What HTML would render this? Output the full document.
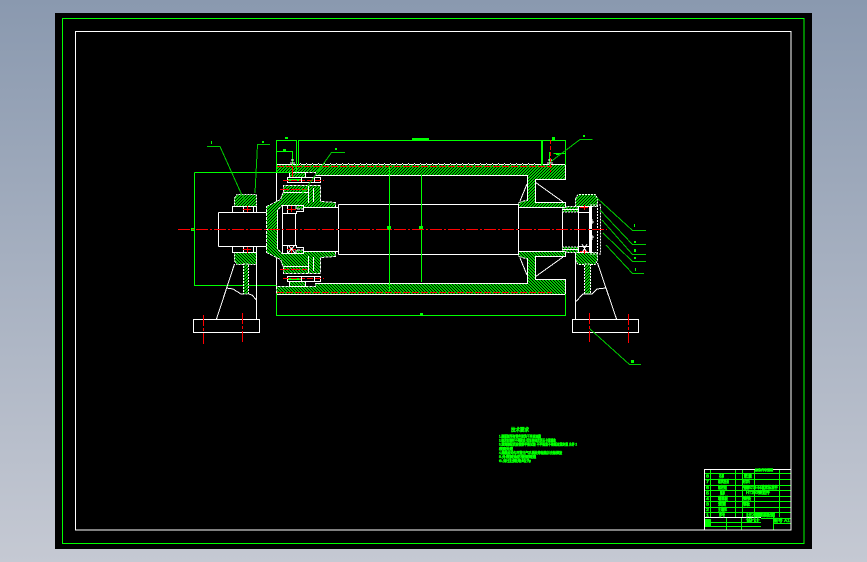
<!DOCTYPE html>
<html>
<head>
<meta charset="utf-8">
<style>
html,body{margin:0;padding:0;width:867px;height:562px;overflow:hidden;background:linear-gradient(180deg,#8a99af 0%,#c5c9d3 100%)}
svg{position:absolute;left:0;top:0}
text{font-family:"Liberation Sans","Noto Sans CJK SC",sans-serif;fill:#0f0;stroke:#0f0;stroke-width:.6}
</style>
</head>
<body>
<svg width="867" height="562" viewBox="0 0 867 562" xmlns="http://www.w3.org/2000/svg" fill="none">
<defs>
<pattern id="h" width="3" height="3" patternUnits="userSpaceOnUse" shape-rendering="crispEdges">
<rect width="3" height="3" fill="#0c0"/>
<rect x="0" y="2" width="1" height="1" fill="#000"/><rect x="1" y="1" width="1" height="1" fill="#000"/><rect x="2" y="0" width="1" height="1" fill="#000"/>
</pattern>
<g id="half">
<!-- roller band -->
<path d="M276.5 164.5H565.5V179.5H535.5V202.5H565.5V207.5H518.5V202.5L527.5 200V175.5H315.5V172.5H276.5Z" fill="url(#h)" stroke="#fff" stroke-dasharray="3 1"/>
<path d="M276 164.5H565" stroke="#fff"/>
<path d="M315 175.5H527.5M527.5 175V201M535.5 180V202.5L565.5 202.5V207.5M535.5 179.5H565.5V164.5" stroke="#fff"/>
<path d="M535 182L563 202M527 184L520 201" stroke="#fff"/>
<path d="M276.5 172.5V207" stroke="#fff"/>
<!-- red centre in band -->
<path d="M277 166.5H552" stroke="#f00" stroke-dasharray="7 2"/>
<!-- upper bolt left -->
<path d="M289.5 172.5H305.5V177.5H289.5Z" fill="url(#h)" stroke="#fff"/>
<path d="M287.5 177.5H320.5V182.5H287.5Z" stroke="#fff"/>
<path d="M288 180H301" stroke="#0f0" stroke-width="2"/>
<path d="M283 180.500H324" stroke="#f00" stroke-dasharray="6 2"/>
<path d="M301.500 177V183M314.500 177V183" stroke="#fff"/>
<!-- hub -->
<path d="M266.500 206.500L280.500 199.500L283.500 191.500V185.500H320.500V201.500L335.500 202.500V207.500H303.500V209H296V205.500H282L277.500 210V229.500H266.500Z" fill="url(#h)" stroke="#fff" stroke-dasharray="3 1"/>
<path d="M283.500 192.500H308.500V201M308.500 186V203M313.500 188V202" stroke="#fff"/>
<path d="M280 189.500H307" stroke="#f00" stroke-dasharray="9 2"/>
<!-- hub inner -->
<path d="M282.500 205.500H303.500V211.500H296.500V213.500H282.500ZM287.500 205.500V213" stroke="#fff"/>
<path d="M287 209.500H296M291.500 206V212" stroke="#f00"/>
<path d="M282.500 213.500V229M295.500 213.500V229M277.500 210V229" stroke="#fff"/>
<path d="M303.500 207.500H338" stroke="#fff"/>
<!-- main shaft -->
<path d="M338.500 204.500H518.500M338.500 204.500V229M518.500 204.500V229" stroke="#fff"/>
<!-- left bearing -->
<path d="M234.500 198L237 194.500H256.500V206.500H234.500Z" fill="url(#h)" stroke="#fff" stroke-dasharray="2 1"/>
<path d="M232.500 206.500H256.500V212.500H232.500ZM243.500 206.500V212.500M253.500 206V212" stroke="#fff"/>
<path d="M243 209.500H251M247.500 206V213" stroke="#f00"/>
<path d="M218.500 212.500H266.500M218.500 212.500V229" stroke="#fff"/>
<!-- right bearing + shaft -->
<path d="M518.500 207.500H562.500V229" stroke="#fff"/>
<path d="M562.500 207.500H566V206.500H578V212H562.500" fill="url(#h)" stroke="#fff" stroke-dasharray="2 1"/>
<path d="M575.500 199L578 194.500H595L597.500 198V206.500H575.500Z" fill="url(#h)" stroke="#fff" stroke-dasharray="2 1"/>
<path d="M578.500 206.500H590.500V212.500H578.500Z" stroke="#fff"/>
<path d="M580 207.500H588M584.500 205V210" stroke="#f00"/>
<path d="M578.500 212.500V229M562.500 209.500H578" stroke="#fff"/>
<path d="M579 212.500H589.500V229" stroke="#fff"/>
<path d="M590.500 206V229" stroke="#fff" stroke-width="3"/>
<path d="M590 205H600.500V229M597.500 205V229" stroke="#fff" stroke-dasharray="2 1"/>
<path d="M592 222H594M592 219V224" stroke="#fff"/>
</g>
</defs>

<rect x="55" y="13" width="757" height="536" fill="#000"/>
<rect x="62.500" y="18.500" width="741.500" height="525" stroke="#0f0"/>
<rect x="75.500" y="31.500" width="715.500" height="498.500" stroke="#fff"/>

<g shape-rendering="crispEdges">
<use href="#half"/>
<use href="#half" transform="translate(0,459) scale(1,-1)"/>

<!-- X marks -->
<path d="M288 245L295 253M295 245L288 253M582 244L587 253M587 244L582 253" stroke="#fff"/>

<!-- serration -->
<path d="M276.500 294.500H565" stroke="#fff" stroke-dasharray="5 2"/>
<path d="M300 164.500H540" stroke="#000" stroke-dasharray="1 5"/>
<path d="M300 163.500H540" stroke="#fff" stroke-dasharray="1 5"/>

<!-- green dims -->
<path d="M194.500 172.500H292.500V151.500H276.500V172.500M276.500 151.500V140.500H296.500V172.500" stroke="#0f0"/>
<path d="M194.500 172.500V285.500H276.500M298.500 140V165M298.500 140.500H565.500V165M541.500 140V165M542.500 140V165" stroke="#0f0"/>
<path d="M389.500 166V291M421.500 175V282" stroke="#0f0"/>
<path d="M276.500 294V315.500H565.500V294" stroke="#0f0"/>
<path d="M553.500 153.500H566M549.500 152V166" stroke="#0f0"/>
<path d="M207 146.500H220L245 202M270 144.500H257.500L255 193M345 152.500H331.500L297 201" stroke="#0c0"/>
<path d="M592.500 139.500H580L549 163" stroke="#0c0"/>
<path d="M646 230.500H632.500L597 198M646 244.500H632.500L600 210M646 254.500H632.500L602 220M646 261.500H632.500L603 233M644 273.500H632.500L606 245" stroke="#0c0"/>
<path d="M641 364.500H629.500L590 329" stroke="#0c0"/>

<!-- ticks and dots -->
<rect x="191" y="228" width="3" height="3" fill="#0f0"/>
<rect x="387" y="226" width="4" height="4" fill="#0f0"/>
<rect x="419" y="226" width="4" height="4" fill="#0f0"/>
<rect x="285" y="137" width="3" height="2" fill="#0f0"/>
<rect x="283" y="149" width="3" height="2" fill="#0f0"/>
<rect x="412" y="138" width="17" height="2" fill="#0f0"/>
<rect x="552" y="137" width="3" height="3" fill="#0f0"/>
<rect x="556" y="153" width="3" height="2" fill="#0f0"/>
<rect x="335" y="148" width="2" height="2" fill="#0f0"/>
<rect x="583" y="135" width="2" height="2" fill="#0f0"/>
<rect x="211" y="141" width="1" height="3" fill="#0f0"/>
<rect x="262" y="141" width="2" height="2" fill="#0f0"/>
<rect x="420" y="313" width="3" height="2" fill="#0f0"/>
<rect x="634" y="224" width="1" height="3" fill="#0f0"/>
<rect x="634" y="241" width="2" height="2" fill="#0f0"/>
<rect x="634" y="249" width="2" height="3" fill="#0f0"/>
<rect x="634" y="257" width="2" height="2" fill="#0f0"/>
<rect x="635" y="268" width="1" height="3" fill="#0f0"/>
<rect x="631" y="360" width="3" height="3" fill="#0f0"/>
<path d="M291 160H294M290 163H295M548 160H552M547 163H553" stroke="#fff"/>

<!-- left pedestal -->
<path d="M243.500 264H248.500V294H243.500Z" fill="url(#h)" stroke="#fff" stroke-dasharray="2 1"/>
<path d="M234.500 264L216.500 319M256.500 253V319M226.500 288L233 289L241 294H243M248.500 294L252 295L256.500 300" stroke="#fff"/>
<path d="M193.500 319.500H259.500V332.500H193.500Z" stroke="#fff"/>
<!-- right pedestal -->
<path d="M584.500 264H590.500V294H584.500Z" fill="url(#h)" stroke="#fff" stroke-dasharray="2 1"/>
<path d="M575.500 253V319M597.500 263L616.500 319M576 301.500L583 294H592L597 289L605.500 288" stroke="#fff"/>
<path d="M572.500 319.500H638.500V332.500H572.500Z" stroke="#fff"/>
<path d="M590 329L629.500 364.500" stroke="#0c0"/>

<!-- red -->
<path d="M178 229.500H607" stroke="#f00" stroke-dasharray="12 2 2 2"/>
<path d="M203.500 315V344M242.500 313V344M589.500 313V344M628.500 314V344" stroke="#f00" stroke-dasharray="11 2 3 2"/>
<path d="M550.500 140V172" stroke="#f00" stroke-dasharray="4 2"/>
<path d="M292.500 166V177" stroke="#f00"/>

<!-- title block -->
<g stroke="#0f0">
<path d="M705 473.500H791M705 479.500H791M705 485.500H791M705 490.500H791M705 496.500H791M705 501.500H791M705 507.500H791M705 512.500H791M761 518.500H791M705 522.500H761M705 526.500H761M773 523.500H791"/>
<path d="M710.500 470V517M735.500 470V517M742.500 470V517M754.500 470V517M779.500 470V517M726.500 517V530M741.500 517V530M773.500 517V530"/>
</g>
<path d="M704.500 517.500H761" stroke="#fff"/>
<rect x="704.500" y="469.500" width="86.500" height="60.500" stroke="#fff"/>
</g>

<!-- tech notes -->
<text x="511" y="431.500" font-size="5" textLength="18" lengthAdjust="spacingAndGlyphs">技术要求</text>
<g font-size="3.600">
<text x="499" y="437.500" textLength="42" lengthAdjust="spacingAndGlyphs">1.装配前所有零件清洗干净涂油脂</text>
<text x="499" y="441.500" textLength="57" lengthAdjust="spacingAndGlyphs">2.轴承安装时不得敲击 保证转动灵活无卡滞现象</text>
<text x="499" y="445.500" textLength="78" lengthAdjust="spacingAndGlyphs">3.滚筒装配后应做静平衡试验 不平衡量不得超过规定值 允许 2</text>
<text x="499" y="450" textLength="14" lengthAdjust="spacingAndGlyphs">表面处理</text>
<text x="499" y="454" textLength="63" lengthAdjust="spacingAndGlyphs">4.焊缝应均匀平整无气孔裂纹等缺陷并去除焊渣</text>
<text x="499" y="458" textLength="37" lengthAdjust="spacingAndGlyphs">5.外表面涂防锈漆两遍</text>
<text x="499" y="462" textLength="32" lengthAdjust="spacingAndGlyphs">6.未注倒角均为</text>
</g>

<!-- title block text -->
<g font-size="4.500">
<text x="719" y="477.500" textLength="5" lengthAdjust="spacingAndGlyphs">名称</text>
<text x="718" y="483" textLength="11" lengthAdjust="spacingAndGlyphs">轴承座盖</text>
<text x="718" y="489" textLength="9" lengthAdjust="spacingAndGlyphs">螺栓组</text>
<text x="720" y="494.500" textLength="5" lengthAdjust="spacingAndGlyphs">轴承</text>
<text x="718" y="500" textLength="10" lengthAdjust="spacingAndGlyphs">端盖板</text>
<text x="718" y="505.500" textLength="8" lengthAdjust="spacingAndGlyphs">滚筒</text>
<text x="718" y="511" textLength="9" lengthAdjust="spacingAndGlyphs">主轴体</text>
<text x="719" y="516.500" textLength="6" lengthAdjust="spacingAndGlyphs">序号</text>
<text x="744" y="477.500" textLength="8" lengthAdjust="spacingAndGlyphs">数量</text>
<text x="742" y="483" textLength="8" lengthAdjust="spacingAndGlyphs">材料</text>
<text x="743" y="489" textLength="6" lengthAdjust="spacingAndGlyphs">钢</text>
<text x="743" y="500" textLength="8" lengthAdjust="spacingAndGlyphs">铸铁</text>
<text x="743" y="505.500" textLength="7" lengthAdjust="spacingAndGlyphs">钢板</text>
<text x="755" y="471" font-size="3" textLength="18" lengthAdjust="spacingAndGlyphs">标准代号说明</text>
<text x="746" y="489" textLength="32" lengthAdjust="spacingAndGlyphs">GB276-94轴承标准件</text>
<text x="746" y="494" textLength="24" lengthAdjust="spacingAndGlyphs">HT200铸造件</text>
<text x="746" y="516.500" textLength="14" lengthAdjust="spacingAndGlyphs">比例</text>
<text x="755" y="516.500" textLength="20" lengthAdjust="spacingAndGlyphs">滚筒装配图</text>
<text x="746" y="522" textLength="14" lengthAdjust="spacingAndGlyphs">设计</text>
<text x="773" y="522" textLength="17" lengthAdjust="spacingAndGlyphs">图号 A1</text>
<text x="706" y="477.500" textLength="3" lengthAdjust="spacingAndGlyphs">8</text>
<text x="706" y="483" textLength="3" lengthAdjust="spacingAndGlyphs">7</text>
<text x="706" y="489" textLength="3" lengthAdjust="spacingAndGlyphs">6</text>
<text x="706" y="494.500" textLength="3" lengthAdjust="spacingAndGlyphs">5</text>
<text x="706" y="500" textLength="3" lengthAdjust="spacingAndGlyphs">4</text>
<text x="706" y="505.500" textLength="3" lengthAdjust="spacingAndGlyphs">3</text>
<text x="706" y="511" textLength="3" lengthAdjust="spacingAndGlyphs">2</text>
<text x="706" y="516.500" textLength="3" lengthAdjust="spacingAndGlyphs">1</text>
</g>
<rect x="705" y="519" width="6" height="8" fill="#0f0"/>
</svg>
</body>
</html>
